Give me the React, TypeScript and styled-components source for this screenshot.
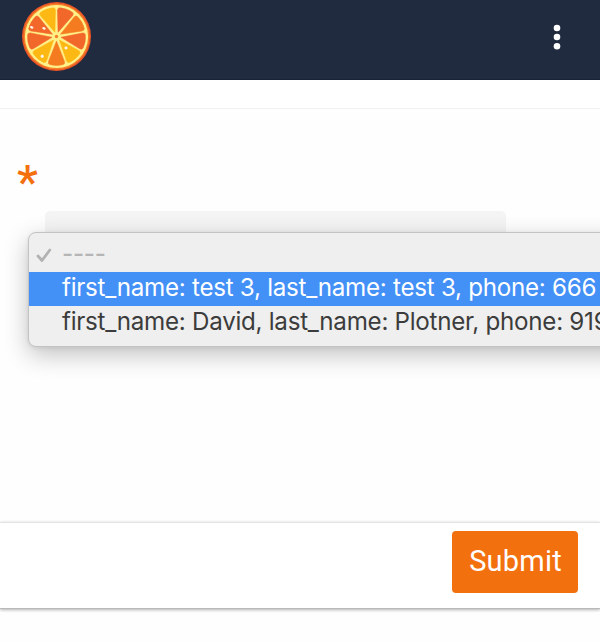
import React from 'react';
import styled, { createGlobalStyle } from 'styled-components';

const GlobalStyle = createGlobalStyle`
  * { box-sizing: border-box; }
  html, body { margin: 0; background: #fff; overflow: hidden; }
`;

const Page = styled.div`
  width: 600px;
  height: 642px;
  display: flex;
  flex-direction: column;
  overflow: hidden;
  background: #fefefe;
  font-family: Roboto, sans-serif;
`;

const Header = styled.header`
  flex: none;
  height: 80px;
  padding: 1px 38px 0 21px;
  display: flex;
  justify-content: space-between;
  background: #212b40;
  border-bottom: 1px solid #182136;
`;

const Logo = styled.svg`
  width: 71px;
  height: 71px;
`;

const MenuButton = styled.button`
  width: 10px;
  height: 26px;
  margin-top: 23px;
  padding: 0;
  border: 0;
  background: none;
  svg { display: block; }
`;

const Spacer = styled.div`
  flex: none;
  height: 29px;
  background: #fff;
  border-bottom: 1px solid #f1f1f1;
`;

const FormBody = styled.main`
  flex: none;
  height: 413px;
  padding: 45px 0 0 17px;
`;

const Required = styled.div`
  height: 57px;
  color: #f4700f;
  font-size: 47px;
  font-weight: 500;
  line-height: 56px;
`;

const SelectField = styled.div`
  position: relative;
  width: 461px;
  height: 60px;
  margin-left: 28px;
  border-radius: 5px;
  background: linear-gradient(#f4f4f4 0 22px, transparent 22px);
`;

const Options = styled.ul`
  position: absolute;
  top: 21px;
  left: -17px;
  width: 640px;
  height: 115px;
  margin: 0;
  padding: 6px 0 0;
  list-style: none;
  background: #efefef;
  border: 1px solid #c3c3c3;
  border-radius: 8px;
  box-shadow: 0 8px 24px rgba(0, 0, 0, 0.24), 0 1px 4px rgba(0, 0, 0, 0.08);
  font-family: Inter, sans-serif;
`;

const Option = styled.li<{ $tone?: 'active' | 'muted' }>`
  display: flex;
  align-items: center;
  height: ${p => (p.$tone === 'muted' ? 33 : 34)}px;
  padding-left: ${p => (p.$tone === 'muted' ? 7 : 33)}px;
  color: ${p => (p.$tone === 'active' ? '#fff' : p.$tone === 'muted' ? '#b5b5b5' : '#3c3c3c')};
  background: ${p => (p.$tone === 'active' ? '#4390f7' : 'transparent')};
  font-size: 24.2px;
  font-weight: ${p => (p.$tone === 'muted' ? 500 : 400)};
  line-height: 30px;
  letter-spacing: -0.28px;
  white-space: nowrap;
`;

const OptionText = styled.span`
  margin-top: -3px;
`;

const Check = styled.svg`
  width: 16px;
  height: 16px;
  margin: -2px 10px 0 0;
`;

const Footer = styled.footer`
  flex: none;
  height: 87px;
  padding: 8px 22px 0 0;
  display: flex;
  justify-content: flex-end;
  background: #fff;
  border-top: 1px solid #e3e3e3;
  border-bottom: 1px solid #b9b9b9;
  box-shadow: 0 1px 3px rgba(0, 0, 0, 0.3);
`;

const Submit = styled.button`
  width: 126px;
  height: 62px;
  padding: 0 0 2px 1px;
  border: 0;
  border-radius: 4px;
  background: #f3700f;
  color: #fff;
  font: 400 29px/34px Roboto, sans-serif;
  letter-spacing: 0.2px;
`;

const RED = '#f2672a';
const ORANGE = '#f57b20';
const YELLOW = '#fdb813';
const wedges = [RED, ORANGE, RED, YELLOW, ORANGE, YELLOW, RED, RED, YELLOW];

function OrangeLogo() {
  return (
    <Logo viewBox="-35.5 -35.5 71 71" aria-label="Orange slice">
      <circle r="34.5" fill="#e95526" />
      <circle r="33" fill="#f58025" />
      <circle r="31.6" fill="#fff08a" />
      {wedges.map((fill, i) => (
        <path
          key={i}
          d="M0-4.6L-8-25Q-8.8-27.3-6.8-28.1Q0-30 6.8-28.1Q8.8-27.3 8-25Z"
          fill={fill}
          stroke={fill}
          strokeWidth="0.5"
          strokeLinejoin="round"
          transform={`rotate(${20 + i * 40})`}
        />
      ))}
      <circle r="3.4" fill="#fff08a" />
      <circle r="1.7" fill="#f58025" />
      <g fill="#fff4e6">
        <ellipse cx="-24.8" cy="-9.2" rx="1.8" ry="1.2" transform="rotate(20 -24.8 -9.2)" />
        <ellipse cx="-12.5" cy="-8.2" rx="1.8" ry="1.2" transform="rotate(20 -12.5 -8.2)" />
        <ellipse cx="9.5" cy="11.5" rx="1.6" ry="1.4" />
        <ellipse cx="-14.3" cy="19.7" rx="1.5" ry="1.7" />
      </g>
    </Logo>
  );
}

export default function App() {
  return (
    <>
      <GlobalStyle />
      <Page>
        <Header>
          <OrangeLogo />
          <MenuButton aria-label="Menu">
            <svg width="10" height="26" viewBox="0 0 10 26" fill="#fff">
              <circle cx="5" cy="4" r="3.3" />
              <circle cx="5" cy="13" r="3.3" />
              <circle cx="5" cy="22.2" r="3.3" />
            </svg>
          </MenuButton>
        </Header>
        <Spacer />
        <FormBody>
          <Required>*</Required>
          <SelectField>
            <Options>
              <Option $tone="muted">
                <Check viewBox="0 0 16 16" fill="none" stroke="#b2b2b2" strokeWidth="2.8" strokeLinecap="round" strokeLinejoin="round">
                  <path d="M2 9L6 13.5L13.8 3" />
                </Check>
                <OptionText>----</OptionText>
              </Option>
              <Option $tone="active">
                <OptionText>first_name: test 3, last_name: test 3, phone: 666</OptionText>
              </Option>
              <Option>
                <OptionText>first_name: David, last_name: Plotner, phone: 919</OptionText>
              </Option>
            </Options>
          </SelectField>
        </FormBody>
        <Footer>
          <Submit>Submit</Submit>
        </Footer>
      </Page>
    </>
  );
}
